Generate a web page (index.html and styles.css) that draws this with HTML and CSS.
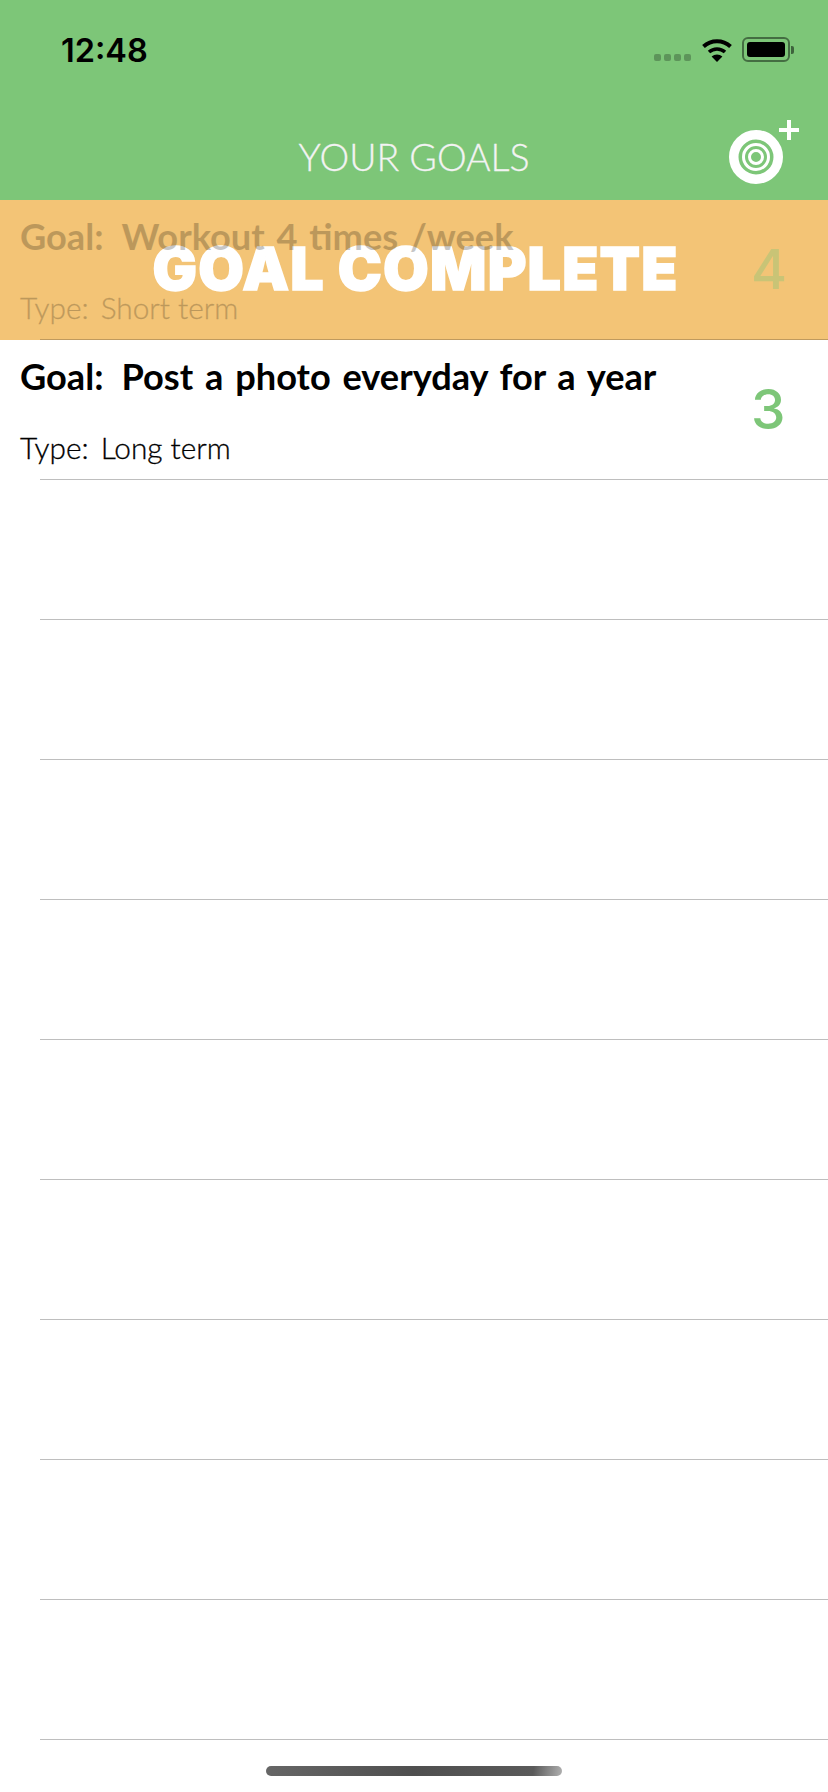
FILE: index.html
```html
<!DOCTYPE html>
<html lang="en">
<head>
    <meta charset="UTF-8">
    <meta name="viewport" content="width=device-width, initial-scale=1.0">
    <title>Your Goals</title>
    <link rel="stylesheet" href="styles.css">
</head>
<body>
    <div class="app-container">
        <header>
            <div class="status-bar">
                <span class="clock">12:48</span>
                <div class="status-icons">
                    <div class="signal"><i></i><i></i><i></i><i></i></div>
                    <svg class="wifi" width="32" height="24" viewBox="0 0 32 24">
                        <path d="M2.5 8.5 A20 20 0 0 1 29.5 8.5" fill="none" stroke="#000" stroke-width="4"/>
                        <path d="M8 14 A12 12 0 0 1 24 14" fill="none" stroke="#000" stroke-width="3.6"/>
                        <path d="M16 24 L10.6 18.6 A8 8 0 0 1 21.4 18.6 Z" fill="#000"/>
                    </svg>
                    <div class="battery">
                        <div class="battery-body"><div class="battery-level"></div></div>
                        <div class="battery-cap"></div>
                    </div>
                </div>
            </div>
            <div class="title-bar">
                <h1>YOUR GOALS</h1>
                <svg class="add-goal" width="70" height="64" viewBox="0 0 70 64">
                    <circle cx="27" cy="37" r="22.25" fill="none" stroke="#fff" stroke-width="9.5"/>
                    <circle cx="27" cy="37" r="12.5" fill="none" stroke="#fff" stroke-width="3"/>
                    <circle cx="27" cy="37" r="6.5" fill="none" stroke="#fff" stroke-width="3"/>
                    <path d="M60 0 V20 M50 10 H70" fill="none" stroke="#fff" stroke-width="4"/>
                </svg>
            </div>
        </header>

        <main>
            <ul class="goal-list">
                <li class="goal-row completed">
                    <div class="complete-banner">GOAL COMPLETE</div>
                    <div class="goal-info">
                        <div class="goal-name"><span class="label">Goal:</span>Workout 4 times /week</div>
                        <div class="goal-type"><span class="label">Type:</span>Short term</div>
                    </div>
                    <div class="goal-count">4</div>
                </li>
                <li class="goal-row">
                    <div class="goal-info">
                        <div class="goal-name"><span class="label">Goal:</span>Post a photo everyday for a year</div>
                        <div class="goal-type"><span class="label">Type:</span>Long term</div>
                    </div>
                    <div class="goal-count">3</div>
                </li>
                <li class="goal-row"></li>
                <li class="goal-row"></li>
                <li class="goal-row"></li>
                <li class="goal-row"></li>
                <li class="goal-row"></li>
                <li class="goal-row"></li>
                <li class="goal-row"></li>
                <li class="goal-row"></li>
                <li class="goal-row"></li>
            </ul>
        </main>

        <div class="home-indicator"></div>
    </div>
</body>
</html>
```

FILE: styles.css
```css
/* Reset and base styles */
* {
    margin: 0;
    padding: 0;
    box-sizing: border-box;
}

body {
    font-family: Lato, "Open Sans", sans-serif;
    background-color: white;
    color: black;
}

/* Layout */
.app-container {
    position: relative;
    width: 828px;
    height: 1792px;
    overflow: hidden;
}

header {
    background-color: #7dc678;
    height: 200px;
}

/* Status bar */
.status-bar {
    display: flex;
    justify-content: space-between;
    align-items: flex-start;
    height: 100px;
    padding: 32px 34px 0 61px;
}

.clock {
    font-family: Inter, sans-serif;
    font-size: 32.5px;
    font-weight: 600;
    line-height: 37px;
}

.status-icons {
    display: flex;
    align-items: flex-end;
    padding-top: 5px;
}

.signal {
    display: flex;
    gap: 3px;
    margin-right: 10px;
    margin-bottom: 1px;
}

.signal i {
    width: 7px;
    height: 7px;
    border-radius: 2px;
    background-color: rgba(0, 0, 0, 0.25);
}

.wifi {
    display: block;
    margin-right: 9px;
}

.battery {
    display: flex;
    align-items: center;
}

.battery-body {
    width: 48px;
    height: 25px;
    padding: 3px;
    border: 2px solid rgba(0, 0, 0, 0.45);
    border-radius: 6px;
}

.battery-level {
    width: 100%;
    height: 100%;
    background-color: black;
    border-radius: 3px;
}

.battery-cap {
    width: 3px;
    height: 8px;
    margin-left: 1px;
    background-color: rgba(0, 0, 0, 0.5);
    border-radius: 0 2px 2px 0;
}

/* Title */
.title-bar {
    position: relative;
    height: 100px;
    padding-top: 37px;
    text-align: center;
}

.title-bar h1 {
    color: #f3f3f3;
    font-size: 37.5px;
    font-weight: 300;
    line-height: 40px;
    -webkit-text-stroke: 0.3px #f3f3f3;
}

.add-goal {
    position: absolute;
    top: 20px;
    right: 29px;
}

/* Goal list */
.goal-list {
    list-style: none;
}

.goal-row {
    position: relative;
    display: flex;
    height: 140px;
}

.goal-row::after {
    content: "";
    position: absolute;
    left: 40px;
    right: 0;
    bottom: 0;
    height: 1px;
    background-color: #bebebe;
}

.goal-info {
    flex: 1;
    padding: 16px 0 0 20px;
}

.goal-name {
    font-size: 36.2px;
    font-weight: 700;
    line-height: 41px;
    word-spacing: 3px;
}

.goal-name .label {
    margin-right: 18px;
}

.goal-type {
    margin-top: 34px;
    font-size: 29.8px;
    font-weight: 300;
    line-height: 34px;
    -webkit-text-stroke: 0.3px currentColor;
}

.goal-type .label {
    margin-right: 12px;
}

.goal-count {
    width: 95px;
    padding: 35px 0 0 18px;
    color: #7dc678;
    font-family: Inter, sans-serif;
    font-size: 55px;
    font-weight: 500;
    line-height: 68px;
}

/* Completed goal */
.completed {
    background-color: #f3c476;
}

.completed .goal-info {
    position: relative;
    opacity: 0.22;
}

.completed .goal-count {
    position: relative;
    opacity: 0.35;
}

.completed::after {
    background-color: #bf9a5e;
}

.complete-banner {
    position: absolute;
    top: 37px;
    left: 0;
    width: 100%;
    padding-left: 3px;
    text-align: center;
    color: white;
    font-family: Inter, sans-serif;
    font-size: 59px;
    font-weight: 900;
    line-height: 64px;
    letter-spacing: 1.2px;
    -webkit-text-stroke: 1.5px white;
}

.home-indicator {
    position: absolute;
    left: 266px;
    bottom: 16px;
    width: 296px;
    height: 10px;
    border-radius: 5px;
    background: linear-gradient(100deg, #666 0%, #4f4f4f 50%, #5a5a5a 90%, #b0b0b0 100%);
}
```
